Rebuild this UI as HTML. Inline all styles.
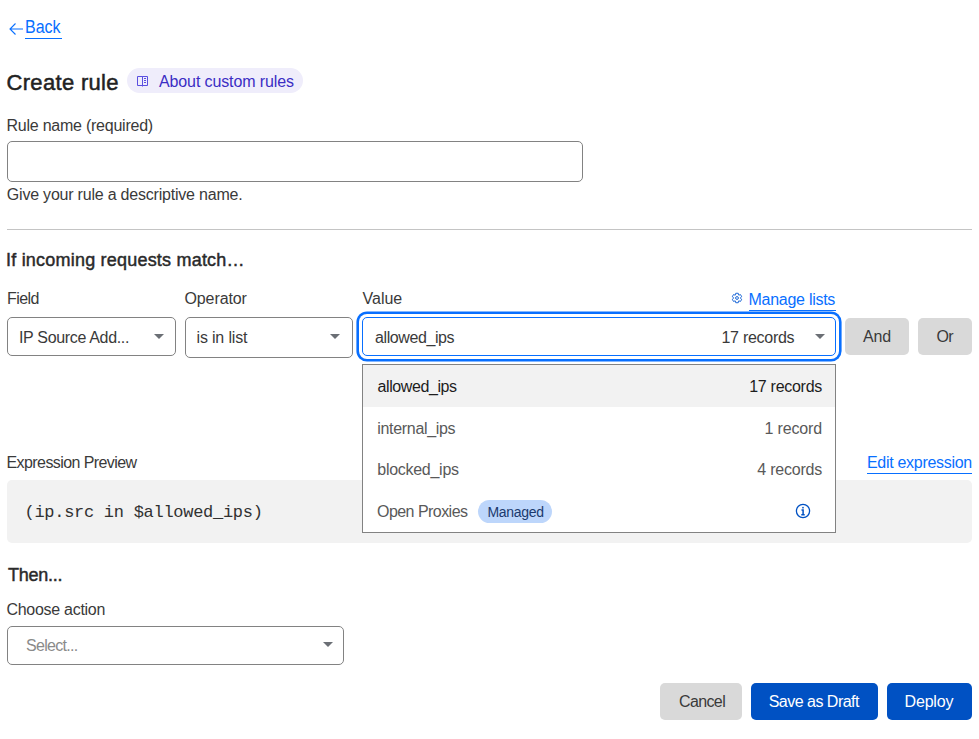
<!DOCTYPE html>
<html><head><meta charset="utf-8">
<style>
*{box-sizing:border-box;margin:0;padding:0}
html,body{width:979px;height:739px;background:#fff;overflow:hidden}
body{position:relative;font-family:"Liberation Sans",sans-serif;color:#3a3a3a;font-size:16px}
.a{position:absolute;white-space:nowrap;line-height:1}
.r{position:absolute;white-space:nowrap;line-height:1;text-align:right}
.box{position:absolute;border:1px solid #828282;border-radius:5px;background:#fff}
.arrow{position:absolute;width:0;height:0;border-left:5px solid transparent;border-right:5px solid transparent;border-top:5px solid #6b6f75}
.btn{position:absolute;border-radius:5px}
.link{color:#086fff}
.ul{position:absolute;height:1px;background:#086fff}
.h{font-weight:400;color:#2a2a2a;-webkit-text-stroke:0.45px #2a2a2a}
</style></head><body>

<!-- Back -->
<svg class="a" style="left:8px;top:22px" width="16" height="14" viewBox="0 0 16 14"><path d="M15 7H2M7.5 1.5L2 7l5.5 5.5" fill="none" stroke="#086fff" stroke-width="1.1"/></svg>
<div class="a link" style="left:25px;top:18px;font-size:18px;transform:scaleX(0.89);transform-origin:0 0">Back</div>
<div class="ul" style="left:25px;top:38px;width:37px"></div>

<!-- Title -->
<div class="a h" style="left:6.5px;top:72px;font-size:22px;letter-spacing:0.32px;color:#222;-webkit-text-stroke:0.5px #222">Create rule</div>
<div class="a" style="left:127px;top:68px;width:176px;height:25px;border-radius:13px;background:#efedfb"></div>
<svg class="a" style="left:137px;top:76px" width="12" height="12" viewBox="0 0 12 12"><path d="M0.5 0.5H5.5V9.5H0.5Z M5.5 0.5H10.5V9.5H5.5Z M5.5 9.5V10.5 M7 2.5H9 M7 4.5H9 M7 6.5H9" fill="none" stroke="#5a4fe0" stroke-width="1"/></svg>
<div class="a" style="left:159px;top:74px;letter-spacing:-0.12px;color:#3b2dc4">About custom rules</div>

<!-- Rule name -->
<div class="a" style="left:6.5px;top:118px;letter-spacing:-0.24px">Rule name (required)</div>
<div class="box" style="left:7px;top:141px;width:576px;height:41px"></div>
<div class="a" style="left:6.8px;top:187px;letter-spacing:-0.21px">Give your rule a descriptive name.</div>

<div class="a" style="left:7px;top:229px;width:965px;height:1px;background:#c4c4c4"></div>

<div class="a h" style="left:6px;top:251px;font-size:18px;letter-spacing:0.21px">If incoming requests match…</div>

<!-- labels -->
<div class="a" style="left:7px;top:291px;letter-spacing:-0.57px">Field</div>
<div class="a" style="left:184.5px;top:291px;letter-spacing:-0.11px">Operator</div>
<div class="a" style="left:362.5px;top:291px">Value</div>
<svg class="a" style="left:731px;top:292px" width="12" height="12" viewBox="0 0 12 12"><g fill="none" stroke="#1f6ad8" stroke-width="1"><path d="M7.49 2.94 L7.27 1.27 L4.73 1.27 L4.51 2.94 L4.10 3.18 L2.54 2.54 L1.27 4.73 L2.61 5.76 L2.61 6.24 L1.27 7.27 L2.54 9.46 L4.10 8.82 L4.51 9.06 L4.73 10.73 L7.27 10.73 L7.49 9.06 L7.90 8.82 L9.46 9.46 L10.73 7.27 L9.39 6.24 L9.39 5.76 L10.73 4.73 L9.46 2.54 L7.90 3.18Z"/><circle cx="6" cy="6" r="1.4"/></g></svg>
<div class="a link" style="left:748.5px;top:292px;letter-spacing:-0.27px">Manage lists</div>
<div class="ul" style="left:749px;top:310px;width:87px"></div>

<!-- selects -->
<div class="box" style="left:7px;top:317px;width:169px;height:39px"></div>
<div class="a" style="left:19px;top:330px;letter-spacing:-0.33px">IP Source Add...</div>
<div class="arrow" style="left:154px;top:334px"></div>

<div class="box" style="left:185px;top:317px;width:168px;height:41px"></div>
<div class="a" style="left:196.5px;top:330px;letter-spacing:-0.17px">is in list</div>
<div class="arrow" style="left:330px;top:334px"></div>

<div class="box" style="left:362px;top:317px;width:474px;height:39px;border-color:#086fff;box-shadow:0 0 0 3px #fff,0 0 0 5.6px #086fff"></div>
<div class="a" style="left:375px;top:330px;letter-spacing:-0.4px">allowed_ips</div>
<div class="a" style="left:721.5px;top:330px;letter-spacing:-0.28px">17 records</div>
<div class="arrow" style="left:815px;top:334px"></div>

<div class="btn" style="left:845px;top:318px;width:64px;height:37px;background:#d9d9d9"></div>
<div class="a" style="left:863px;top:329px;letter-spacing:-0.2px">And</div>
<div class="btn" style="left:918px;top:318px;width:54px;height:37px;background:#d9d9d9"></div>
<div class="a" style="left:936.5px;top:329px;letter-spacing:-0.6px">Or</div>

<!-- expression preview -->
<div class="a" style="left:6.5px;top:455px;letter-spacing:-0.58px">Expression Preview</div>
<div class="a link" style="left:867px;top:455px;letter-spacing:-0.3px">Edit expression</div>
<div class="ul" style="left:867px;top:473px;width:105px"></div>
<div class="a" style="left:7px;top:480px;width:965px;height:63px;border-radius:5px;background:#f2f2f2"></div>
<div class="a" style="left:24.5px;top:504px;font-family:'Liberation Mono',monospace;font-size:17px;letter-spacing:-0.28px;color:#313131">(ip.src in $allowed_ips)</div>

<!-- dropdown -->
<div class="a" style="left:362px;top:364px;width:474px;height:169px;border:1px solid #828282;background:#fff"></div>
<div class="a" style="left:363px;top:365px;width:472px;height:42px;background:#f2f2f2"></div>
<div class="a" style="left:377.5px;top:379px;letter-spacing:-0.4px;color:#1d1d1d">allowed_ips</div>
<div class="r" style="left:600px;width:222px;top:379px;letter-spacing:-0.28px;color:#1d1d1d">17 records</div>
<div class="a" style="left:377.3px;top:421px;letter-spacing:-0.32px;color:#595959">internal_ips</div>
<div class="r" style="left:600px;width:222px;top:421px;letter-spacing:-0.14px;color:#595959">1 record</div>
<div class="a" style="left:377.3px;top:462px;letter-spacing:-0.28px;color:#595959">blocked_ips</div>
<div class="r" style="left:600px;width:222px;top:462px;letter-spacing:-0.22px;color:#595959">4 records</div>
<div class="a" style="left:377px;top:504px;letter-spacing:-0.54px;color:#595959">Open Proxies</div>
<div class="a" style="left:478px;top:500px;width:74px;height:23px;border-radius:12px;background:#bdd6fb"></div>
<div class="a" style="left:487.4px;top:505px;font-size:14px;letter-spacing:-0.27px;color:#1b3a6e">Managed</div>
<svg class="a" style="left:795px;top:503px" width="16" height="16" viewBox="0 0 16 16"><circle cx="8" cy="8" r="6.6" fill="none" stroke="#0051c3" stroke-width="1.3"/><circle cx="8" cy="4.7" r="0.85" fill="#0051c3"/><path d="M6.5 6.9H8.1V11.6M6.3 11.7H9.7" fill="none" stroke="#0051c3" stroke-width="1.5"/></svg>

<!-- Then -->
<div class="a h" style="left:8px;top:566px;font-size:18px;letter-spacing:-0.25px">Then...</div>
<div class="a" style="left:6.5px;top:602px;letter-spacing:-0.29px">Choose action</div>
<div class="box" style="left:7px;top:626px;width:337px;height:39px"></div>
<div class="a" style="left:26px;top:638px;letter-spacing:-0.71px;color:#8a8a8a">Select...</div>
<div class="arrow" style="left:323px;top:642px"></div>

<!-- buttons -->
<div class="btn" style="left:660px;top:683px;width:82px;height:37px;background:#d9d9d9"></div>
<div class="a" style="left:679px;top:694px;letter-spacing:-0.62px">Cancel</div>
<div class="btn" style="left:751px;top:683px;width:127px;height:37px;background:#0051c3"></div>
<div class="a" style="left:768.7px;top:694px;letter-spacing:-0.51px;color:#fff">Save as Draft</div>
<div class="btn" style="left:887px;top:683px;width:85px;height:37px;background:#0051c3"></div>
<div class="a" style="left:904.6px;top:694px;letter-spacing:-0.2px;color:#fff">Deploy</div>

</body></html>
